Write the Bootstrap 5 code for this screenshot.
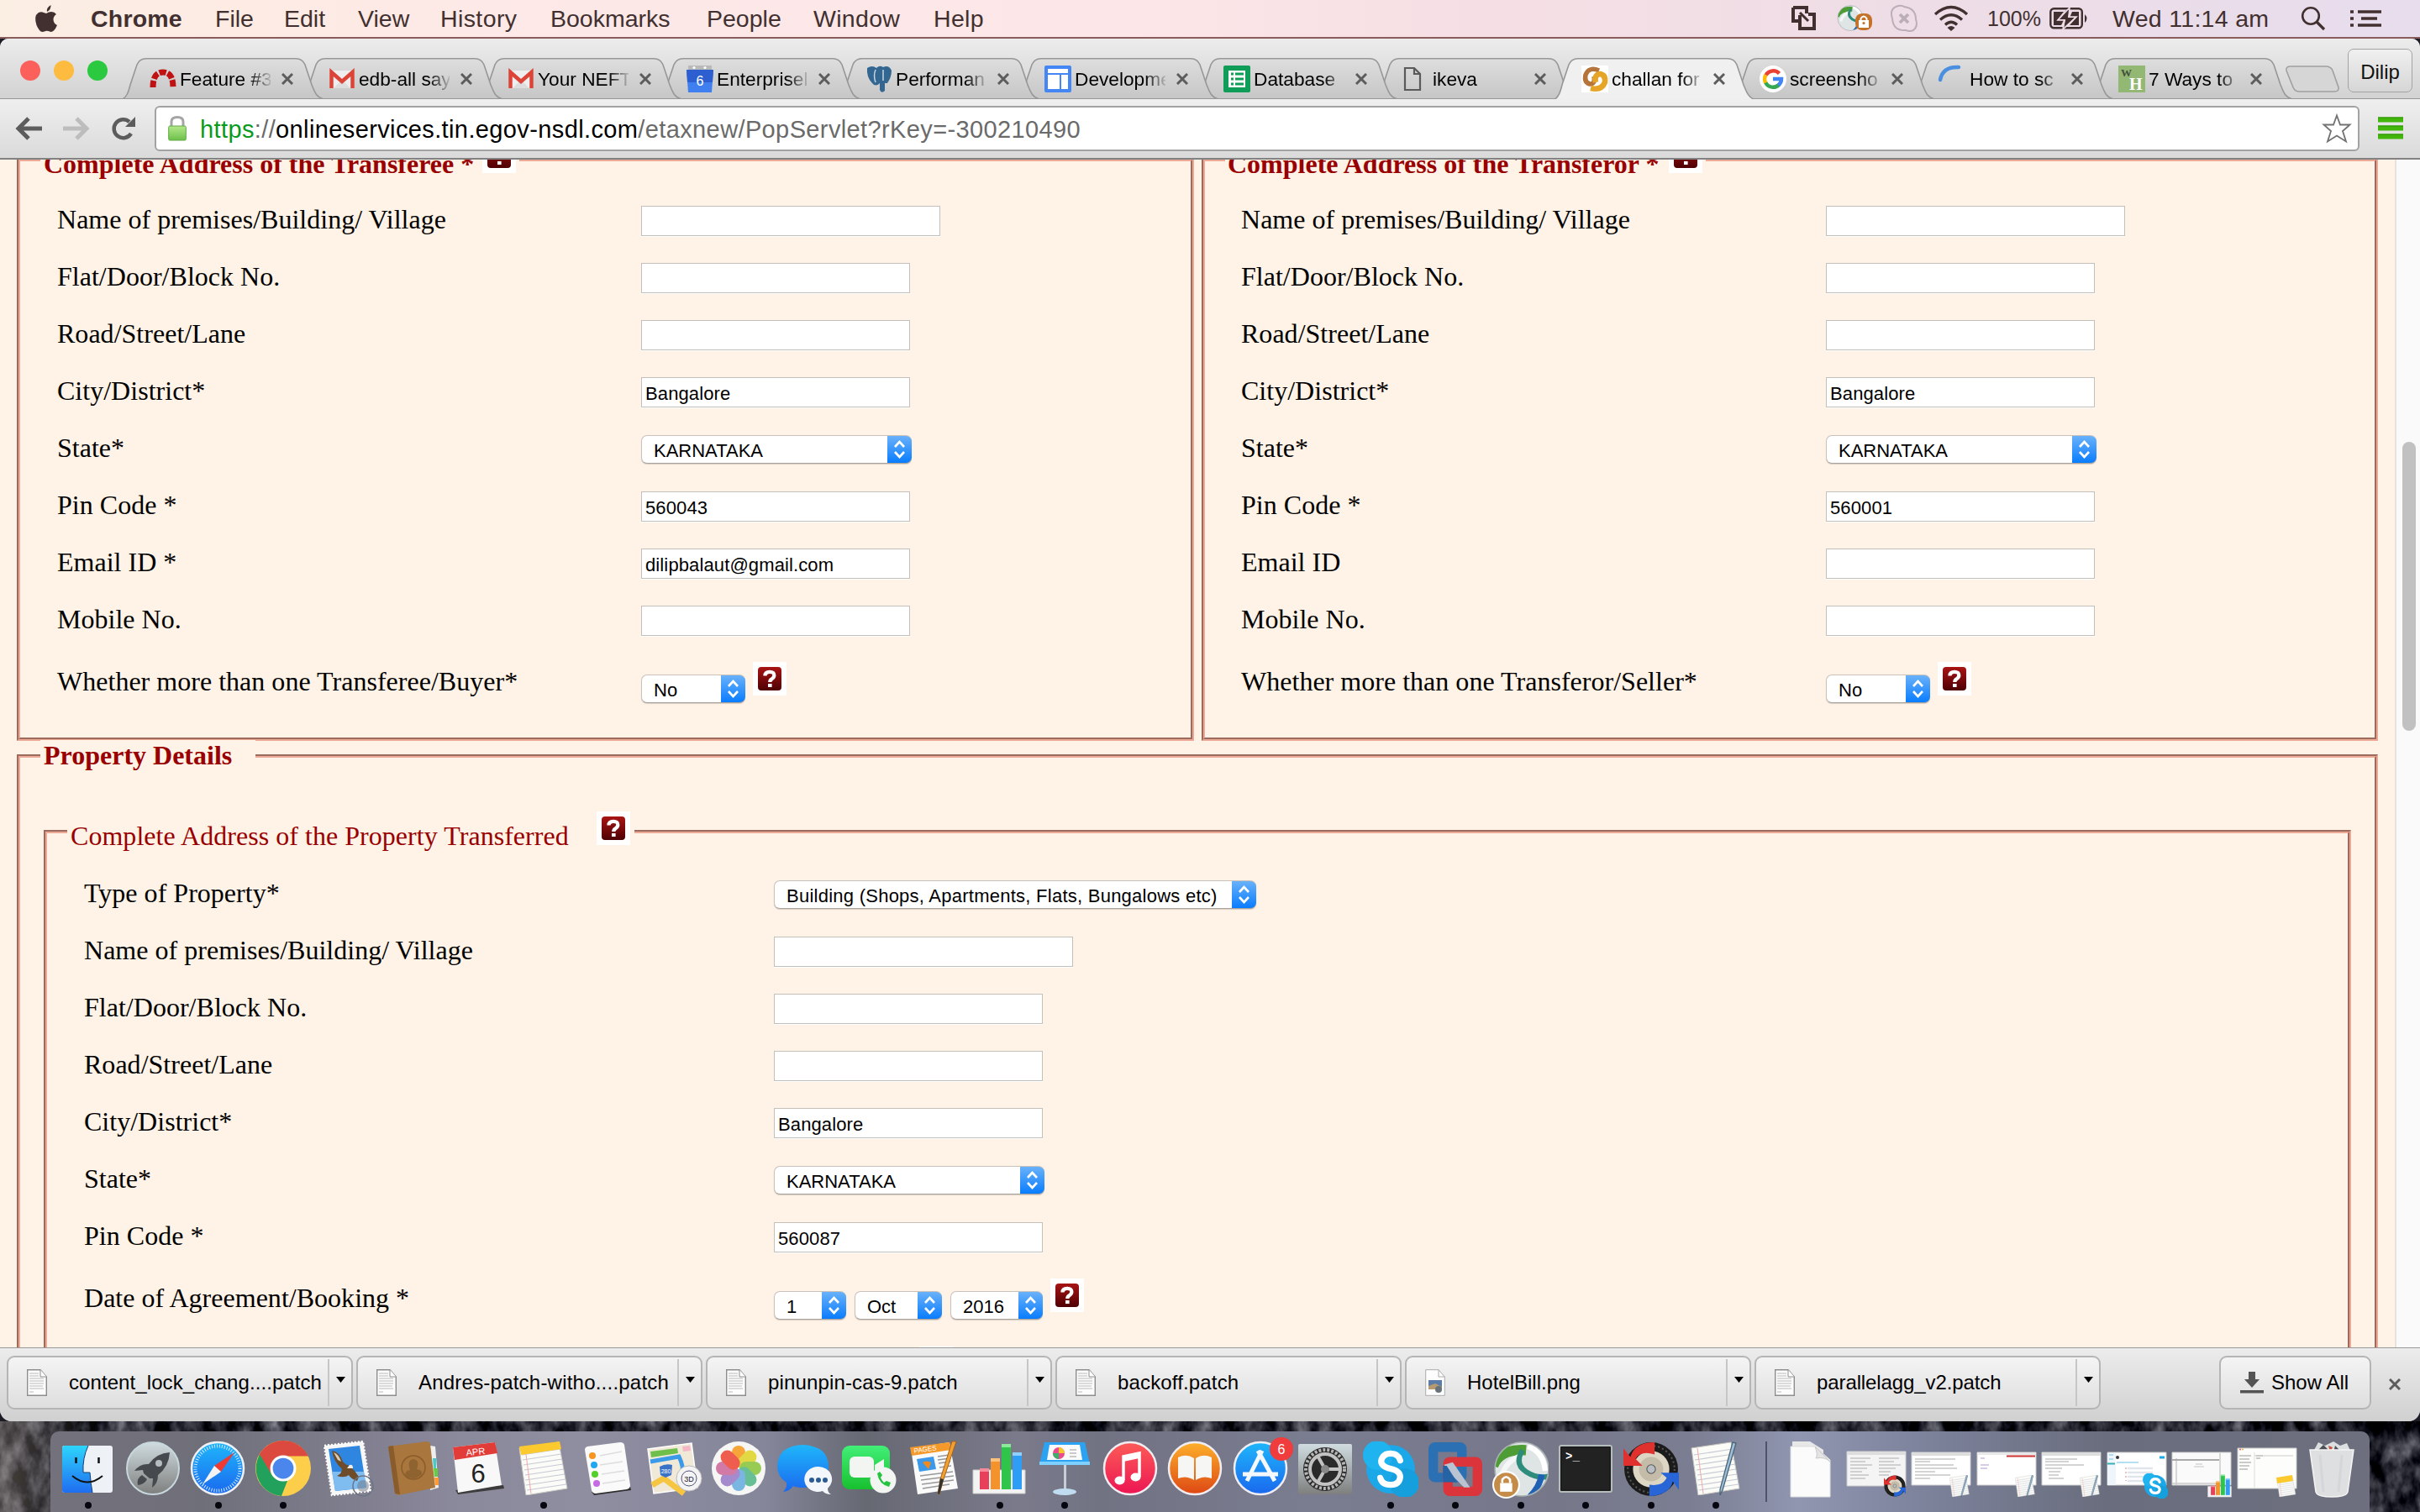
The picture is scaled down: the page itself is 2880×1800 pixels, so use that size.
<!DOCTYPE html>
<html lang="en">
<head>
<meta charset="utf-8">
<title>Challan form</title>
<link href="https://cdn.jsdelivr.net/npm/bootstrap@5.3.0/dist/css/bootstrap.min.css" rel="stylesheet">
<style>
html,body{width:2880px;height:1800px;overflow:hidden}
body{font-family:"Liberation Sans",Arial,sans-serif;color:#000;background:#1c1d24}
svg{display:block;overflow:visible;flex:none}
.menubar{height:46px;background:linear-gradient(90deg,#fbeee3 0,#fdebe4 300px,#fde8e8 700px,#fce6e7 1350px,#f5dfe4 1750px,#eedde6 2300px,#e7dded 2880px);border-bottom:2px solid #8a5c5c;color:#41302f;font-size:28.5px;line-height:46px;padding-left:42px;white-space:nowrap}
.menubar span{flex:none;margin-top:-1px}
.desk{height:1754px;background:#1c1d24}
.chromewin{height:1646px;background:#dcdcdc;border-radius:10px 10px 14px 14px;overflow:hidden;position:relative}
.tabstrip{height:72px;background:linear-gradient(#ececec,#d2d2d2);padding-top:23px;border-bottom:0;position:relative}
.tabstrip:after{content:"";position:absolute;left:0;right:0;bottom:0;height:1.5px;background:#989898;z-index:20}
.lights{width:145px;padding:3px 0 0 24px;gap:16px}
.lights i{width:24px;height:24px;border-radius:50%;display:block}
.ctab{width:240px;height:49px;margin-right:-27px;position:relative;flex:none}
.ctab>svg{position:absolute;left:0;top:0}
.ctab .inner{position:relative;height:49px;padding:0 0 0 33px}
.fav{width:32px;height:32px;flex:none}
.ttl{width:112px;font-size:22.7px;line-height:52px;padding-left:4px;white-space:nowrap;-webkit-mask-image:linear-gradient(90deg,#000 78%,transparent 103%);mask-image:linear-gradient(90deg,#000 78%,transparent 103%)}
.cls{margin-left:13px}
.ubtn{width:77px;height:52px;border:1.5px solid #a3a3a3;border-radius:7px;background:linear-gradient(#f0f0f0,#d6d6d6);font-size:24px;line-height:54px;text-align:center;margin-top:-11px;color:#111}
.toolbar{height:72px;background:linear-gradient(#efefef,#dadada);border-bottom:2px solid #828282;padding:8px 0 0 19px}
.omni{width:2624px;height:54px;border:2px solid #a2a2a2;border-radius:6px;background:#fff;margin-left:23px;padding:0 8px 0 14px}
.url{font-size:29px;color:#6a6a6a;letter-spacing:.38px;margin:3px 0 0 16px}
.pagev{height:1414px;background:#fff2e6;overflow:hidden;font-family:"Liberation Serif","Times New Roman",serif;font-size:32px}
.pagec{width:2850px;padding:0 20px;margin-top:-24px}
.gutter{width:30px;background:#fafafa;border-left:2px solid #e8e2dc;padding:336px 0 0 7px}
.gutter i{display:block;width:16px;height:344px;border-radius:8px;background:#c1c1c1}
.box{min-width:0;position:relative;border-style:solid;border-width:2px;border-color:#9c6b5d #eba996 #eba996 #9c6b5d}
.box:before{content:"";position:absolute;inset:0;border:2px solid;border-color:#eba996 #9c6b5d #9c6b5d #eba996;pointer-events:none}
.lgd{position:relative;background:#fff2e6;color:#990000;line-height:36px;display:flex;white-space:nowrap;padding:0 4px;width:max-content;margin:0}
.frow{height:68px;display:flex;align-items:center}
.frow label{line-height:36px;margin-top:-3px;flex:none;white-space:nowrap;letter-spacing:.02px}
.half label{width:695px}
.half.rt label{width:696px}
.full label{width:821px}
.frow.tall{align-items:flex-start;height:100px}
.frow.tall label{margin-top:21px}
.frow.tall .sel{margin-top:31px}
.frow.tall .helpq{margin-top:16px}
.inp{width:320px;height:36px;margin-top:1px;border:1.5px solid #c3bfbb;border-radius:0;background:#fff;padding:4px 0 0 4px;font:22px/30px "Liberation Sans",Arial,sans-serif;letter-spacing:.12px;color:#000;box-shadow:0 1px #fff}
.inp.wide{width:356px}
.sel{height:34px;margin-top:2px;border:1px solid #c9c1ba;border-bottom-color:#a8a19c;border-right:0;border-radius:7px;padding:2.5px 0 0 14px;font:22px/30px "Liberation Sans",Arial,sans-serif;color:#000;box-shadow:0 1px 1px #d8cec4;
background:url("data:image/svg+xml,%3Csvg xmlns='http://www.w3.org/2000/svg' viewBox='0 0 29 34'%3E%3Cdefs%3E%3ClinearGradient id='g' x2='0' y2='1'%3E%3Cstop stop-color='%236cb3fa'/%3E%3Cstop offset='1' stop-color='%23067bff'/%3E%3C/linearGradient%3E%3C/defs%3E%3Cpath fill='url(%23g)' d='M0 0h29v34H0z'/%3E%3Cpath d='M9 14l5.5-6 5.5 6M9 20l5.5 6 5.5-6' fill='none' stroke='white' stroke-width='2.6'/%3E%3C/svg%3E") right center/29px 34px no-repeat border-box #fff;white-space:nowrap;overflow:hidden}
.sel.long{letter-spacing:.25px}
.helpq{width:40px;height:40px;background:#fff;padding:6px;flex:none}
.shelf{height:88px;background:linear-gradient(#ececec,#d0d0d0);padding:9px 0 0 8px;border-top:1px solid #999}
.dl{width:412px;height:64px;border:2px solid #b5b5b5;border-radius:9px;background:linear-gradient(#f4f4f4,#dedede);margin-right:4px;font-size:24px;line-height:59px;padding-left:22px;white-space:nowrap;flex:none}
.dl .nm{flex:1;padding-left:26px}
.dl .ar{width:28px;height:56px;border-left:2px solid #c6c6c6;margin-top:2px;padding:21px 0 0 8px}
.showall{width:181px;height:64px;border:2px solid #b5b5b5;border-radius:9px;background:linear-gradient(#f4f4f4,#dedede);font-size:24px;padding-left:23px}
.dockwrap{height:108px;padding:12px 60px 0;position:relative;overflow:hidden}
.dockwrap>.wall{position:absolute;left:0;top:-14px}
.dock{width:2760px;height:96px;border-radius:10px 10px 0 0;background:linear-gradient(90deg,#73717b 0,#6f6f7a 180px,#8a889b 480px,#8f8da0 640px,#85869a 850px,#666872 970px,#7a7a8b 1150px,#717383 1250px,#7a7c90 1500px,#767789 1800px,#7b7e92 1950px,#9096b0 2080px,#7a8098 2250px,#696d7d 2450px,#6d6f7e 2760px);padding-left:5.5px;position:relative}
.app{width:77.52px;flex:none;padding-top:12px;position:relative}
.app>svg{margin:0 auto}
.app.on:after{content:"";position:absolute;left:35px;top:84px;width:8px;height:8px;border-radius:50%;background:#06060f}
.sep{width:35.5px;padding-left:20px}.sep:before{content:"";display:block;width:2px;height:72px;margin-top:12px;background:#50546a}
</style>
</head>
<body>
<svg width="0" height="0" class="position-absolute"><defs>
<linearGradient id="tg" x2="0" y2="1"><stop stop-color="#dedede"/><stop offset="1" stop-color="#c6c6c6"/></linearGradient>
<linearGradient id="rg" x2="0" y2="1"><stop stop-color="#a81414"/><stop offset="1" stop-color="#4e0004"/></linearGradient>
<linearGradient id="bl" x2="0" y2="1"><stop stop-color="#1fb6fb"/><stop offset="1" stop-color="#1a68ee"/></linearGradient>
<linearGradient id="fi" x2="0" y2="1"><stop stop-color="#2ed5fd"/><stop offset="1" stop-color="#1f6df0"/></linearGradient>
<linearGradient id="gr" x2="0" y2="1"><stop stop-color="#42ef77"/><stop offset="1" stop-color="#18c02f"/></linearGradient>
<linearGradient id="it" x2="0" y2="1"><stop stop-color="#fc5c57"/><stop offset="1" stop-color="#ec1553"/></linearGradient>
<linearGradient id="ib" x2="0" y2="1"><stop stop-color="#fdb02b"/><stop offset="1" stop-color="#dd4714"/></linearGradient>
<linearGradient id="sil" x2="0" y2="1"><stop stop-color="#d0dce0"/><stop offset="1" stop-color="#7e7f7e"/></linearGradient>
<symbol id="tab" viewBox="0 0 240 49"><path d="M0 49C6 47 8 40 10 32L18 8Q21 1 29 .8H207Q215 1 218 8L226 32C230 42 232 47 240 49Z" fill="url(#tg)" stroke="#979797" stroke-width="1.6"/></symbol>
<symbol id="tabA" viewBox="0 0 240 49"><path d="M0 50C6 47 8 40 10 32L18 8Q21 1 29 .8H207Q215 1 218 8L226 32C230 42 232 47 240 50Z" fill="#f0f0f0" stroke="#979797" stroke-width="1.6"/></symbol>
<symbol id="x" viewBox="0 0 14 14"><path d="M1 1l12 12M13 1L1 13" stroke="#5c5c5c" stroke-width="3" fill="none"/></symbol>
<symbol id="q" viewBox="0 0 28 28"><rect width="28" height="28" rx="4" fill="url(#rg)"/><path d="M8.500 10.500Q8.500 5.800 14 5.800T19.300 10Q19.300 12.500 16.500 14.300Q14.300 15.600 14.300 18" fill="none" stroke="#fff" stroke-width="4.300"/><rect x="12" y="20" width="4.600" height="4" fill="#fff"/></symbol>
<symbol id="gm" viewBox="0 0 32 32"><path d="M2 6h28v21H2z" fill="#eee"/><path d="M6 27L16 17 26 27z" fill="#ddd"/><path d="M3.500 27V8L16 19 28.500 8V27" fill="none" stroke="#dc4437" stroke-width="4.500"/></symbol>
<symbol id="file" viewBox="0 0 24 32"><path d="M.7 .7H16L23.300 9V31.300H.7Z" fill="#fcfcfc" stroke="#8d8d8d" stroke-width="1.400"/><path d="M16 .7V9H23.300" fill="#fff" stroke="#8d8d8d"/><path d="M3 5h11M3 8h11M3 11h17M3 14h17M3 17h17M3 20h16M3 23h17M3 27h5" stroke="#cfcfcf" stroke-width="1.500"/></symbol>
<symbol id="skype" viewBox="0 0 64 64"><circle cx="32" cy="32" r="28" fill="#1ba8e8"/><circle cx="17" cy="16" r="17" fill="#1fb3ef"/><circle cx="48" cy="48" r="17" fill="#169fdd"/><path d="M43 22Q41 14 32 14T21 22.500Q21 29 32 31.500T43 41Q42 50 32 50T20 42" fill="none" stroke="#fff" stroke-width="7" stroke-linecap="round"/></symbol>
<symbol id="note" viewBox="0 0 64 64"><path d="M3 8L50 1 60 56 11 64Z" fill="#fbfbf8" stroke="#c8c8c0"/><path d="M6 16L52 9M7 22L53 15M8 28L54 21M9 34L55 27M10 40L56 33M10 46L57 39M11 52L58 45M12 58L59 51" stroke="#c5cad3" stroke-width="1.200"/><path d="M10 8L17 62" stroke="#eaa" /></symbol>
<symbol id="textedit" viewBox="0 0 64 64"><use href="#note" width="64" height="64"/><path d="M56 2L40 58 37 64 37 57 52 1Z" fill="#9cc0da" stroke="#4e6476" stroke-width="1.300"/></symbol>
<symbol id="numbers" viewBox="0 0 64 64"><path d="M1 34H63V62H1Z" fill="#f3f3f3" stroke="#ccc"/><path d="M9 34h11v23H9z" fill="#e8405a"/><path d="M22 22h11v35H22z" fill="#f4932c"/><path d="M35 5h11v52H35z" fill="#2fc54a"/><path d="M48 15h11v42H48z" fill="#2e9df5"/><path d="M9 32h11v4H9z" fill="#f58a98"/><path d="M22 20h11v4H22z" fill="#fcc27c"/><path d="M35 3h11v4H35z" fill="#8be89a"/><path d="M48 13h11v4H48z" fill="#90d0ff"/></symbol>
<symbol id="sync" viewBox="0 0 64 64"><circle cx="32" cy="32" r="31" fill="#1b1b1b"/><circle cx="32" cy="32" r="27" fill="none" stroke="#555" stroke-width="2" stroke-dasharray="2 3"/><circle cx="32" cy="32" r="21" fill="#ddd6c4"/><circle cx="32" cy="32" r="14" fill="#c4bca8"/><path d="M36 1Q13 1 8 18L0 8V28H22L14 20Q20 10 36 15Z" fill="#e0312e"/><path d="M30 63Q53 62 57 46L64 56V36H43L50 42Q46 52 30 50Z" fill="#2866d8"/><circle cx="32" cy="32" r="5" fill="#b8bec4" stroke="#555"/></symbol>
<symbol id="globe" viewBox="0 0 64 64"><clipPath id="gc"><circle cx="33" cy="32" r="31"/></clipPath><g clip-path="url(#gc)"><rect width="64" height="64" fill="#dfe5e5"/><path d="M0 28Q8 8 38 10" stroke="#4d9c35" stroke-width="12" fill="none"/><path d="M10 40Q14 22 34 16" stroke="#f4f7f6" stroke-width="6" fill="none"/><path d="M34 10Q24 26 38 35T66 40" stroke="#2d8c7c" stroke-width="6" fill="none"/><path d="M56 38Q54 52 42 64" stroke="#1f62b4" stroke-width="7" fill="none"/><path d="M40 6Q58 12 60 34" stroke="#fff" stroke-width="6" fill="none"/></g><circle cx="33" cy="32" r="31" fill="none" stroke="#a9b2b2" stroke-width="1.500"/></symbol>
<symbol id="vm" viewBox="0 0 64 64"><rect x="6.500" y="6.500" width="33" height="35" rx="2" fill="none" stroke="#2c70b4" stroke-width="11"/><rect x="23.500" y="23.500" width="34" height="34" rx="2" fill="none" stroke="#dc343b" stroke-width="11"/><path d="M18 29H29V42H18Z" fill="#2563a4"/><path d="M19 27L29 24L49 53H42L29 40Z" fill="#b9c3d2"/><path d="M18 28H22L34 47H18Z" fill="#2563a4"/></symbol>
<linearGradient id="lockg" x2="0" y2="1"><stop stop-color="#b5e88a"/><stop offset="1" stop-color="#6cc04a"/></linearGradient>
</defs></svg>

<header class="menubar d-flex align-items-center position-relative">
 <svg width="26" height="32" viewBox="0 0 26 32" style="width:26px"><path d="M18.500 0Q19 5 14 8Q13 3 18.500 0ZM13 10Q16 8 19 8Q23 8.200 25 11Q21.500 13.500 21.500 17Q21.500 22 26 24Q22.500 32 18.500 32Q15 30.500 13 30.700Q9.500 32 8 32Q4.500 31 1.500 24Q-2 13 3.500 9.300Q7 7.200 10 9Z" fill="#41302f"/></svg>
 <span class="fw-bold" style="margin-left:40px;width:148px;letter-spacing:.2px">Chrome</span><span style="width:82px">File</span><span style="width:88px">Edit</span><span style="width:98px">View</span><span style="width:131px;letter-spacing:.4px">History</span><span style="width:186px">Bookmarks</span><span style="width:127px">People</span><span style="width:143px;letter-spacing:.3px">Window</span><span style="letter-spacing:.3px">Help</span>
 <div class="d-flex align-items-center ms-auto" style="padding-right:46px">
  <svg width="30" height="30" viewBox="0 0 30 30"><path d="M2 2H18V9M2 2V18H9M10 11V27H27V10H20" fill="none" stroke="#41302f" stroke-width="4"/><path d="M10 8L20 18" stroke="#41302f" stroke-width="3"/></svg>
  <svg width="43" height="32" viewBox="0 0 43 32" style="margin-left:24px"><use href="#globe" width="31" height="31"/><rect x="22" y="10" width="20" height="20" rx="8" fill="#c4722a"/><rect x="26" y="18" width="12" height="9" fill="#fff"/><path d="M28.500 19V16Q32 11 35.500 16V19" fill="none" stroke="#fff" stroke-width="2"/><circle cx="32" cy="21.500" r="1.600" fill="#c4722a"/></svg>
  <svg width="32" height="32" viewBox="0 0 32 32" style="margin-left:21px"><path d="M9 1Q14 0 16 2Q30 4 30 17Q33 25 27 30Q23 32 18 30Q3 31 2 16Q-2 4 9 1Z" fill="none" stroke="#bcaeb6" stroke-width="2"/><path d="M11 11L21 21M21 11L11 21" stroke="#bcaeb6" stroke-width="3.800"/></svg>
  <svg width="42" height="30" viewBox="0 0 42 30" style="margin-left:19px"><path d="M2 10Q21-7 40 10M8 16.500Q21 5 34 16.500M14 22.500Q21 16 28 22.500" fill="none" stroke="#41302f" stroke-width="3.300"/><path d="M16.500 26Q21 22 25.500 26L21 30Z" fill="#41302f"/></svg>
  <span style="margin-left:22px;width:74px;font-size:25px">100%</span>
  <svg width="46" height="26" viewBox="0 0 46 26"><rect x="1.300" y="1.300" width="37.500" height="23" rx="4" fill="none" stroke="#41302f" stroke-width="2.400"/><path d="M5 5H17L9 15H17L14 21H5ZM35 5H27L24.500 11H33L24 21H35Z" fill="#41302f"/><path d="M20 3L11 14H19L17 24L30 12H22L24 3Z" fill="#41302f"/><path d="M24 0L10 15H18L16 26L32 11H23Z" fill="none" stroke="#eedde6" stroke-width="1.600"/><path d="M42 8Q47 13 42 18Z" fill="#41302f"/></svg>
  <span style="margin-left:29px;width:224px;font-size:28.500px;letter-spacing:.3px">Wed 11:14 am</span>
  <svg width="30" height="28" viewBox="0 0 30 28"><circle cx="12" cy="11" r="9.800" fill="none" stroke="#41302f" stroke-width="2.600"/><path d="M19 18L28 27" stroke="#41302f" stroke-width="3.200"/></svg>
  <svg width="37" height="20" viewBox="0 0 37 20" style="margin-left:29px"><path d="M0 2H4M9 2H37M0 10H4M13 10H32M0 18H4M9 18H37" stroke="#41302f" stroke-width="3.600"/></svg>
 </div>
</header>

<div class="desk">
<main class="chromewin">
 <div class="tabstrip d-flex">
  <div class="lights d-flex"><i style="background:#fc605b"></i><i style="background:#fdbc40"></i><i style="background:#2ac940"></i></div>
  <div class="ctab" style="z-index:12"><svg width="240" height="49"><use href="#tab"/></svg><div class="inner d-flex align-items-center"><svg class="fav" viewBox="0 0 32 32"><path d="M4 26Q4 8 16 8T28 26" fill="none" stroke="#c01212" stroke-width="7" stroke-dasharray="8 2"/></svg><div class="ttl">Feature #3</div><svg class="cls" width="14" height="14"><use href="#x"/></svg></div></div>
  <div class="ctab" style="z-index:11"><svg width="240" height="49"><use href="#tab"/></svg><div class="inner d-flex align-items-center"><svg class="fav"><use href="#gm"/></svg><div class="ttl">edb-all say</div><svg class="cls" width="14" height="14"><use href="#x"/></svg></div></div>
  <div class="ctab" style="z-index:10"><svg width="240" height="49"><use href="#tab"/></svg><div class="inner d-flex align-items-center"><svg class="fav"><use href="#gm"/></svg><div class="ttl">Your NEFT</div><svg class="cls" width="14" height="14"><use href="#x"/></svg></div></div>
  <div class="ctab" style="z-index:9"><svg width="240" height="49"><use href="#tab"/></svg><div class="inner d-flex align-items-center"><svg class="fav" viewBox="0 0 32 32"><path d="M2 0h28v6H2z" fill="#b9b9b9"/><circle cx="9" cy="2.500" r="1.600" fill="#fff"/><circle cx="22" cy="2.500" r="1.600" fill="#fff"/><path d="M0 5h32L30 32H2Z" fill="#3f7ff0"/><path d="M0 5h32L31 20H1Z" fill="#2d5fd0"/><text x="16" y="24" font-size="16" text-anchor="middle" fill="#fff">6</text></svg><div class="ttl">Enterprisel</div><svg class="cls" width="14" height="14"><use href="#x"/></svg></div></div>
  <div class="ctab" style="z-index:8"><svg width="240" height="49"><use href="#tab"/></svg><div class="inner d-flex align-items-center"><svg class="fav" viewBox="0 0 32 32"><path d="M2 3Q8-1 13 3Q17-1 21 2Q28-1 31 6Q31 14 26 21H23V30Q19 34 17 29V21Q12 26 8 21Q1 14 2 3Z" fill="#336791"/><path d="M12 5Q9 12 12 20M21 5V18" stroke="#c6d5e2" stroke-width="1.500" fill="none"/></svg><div class="ttl">Performan</div><svg class="cls" width="14" height="14"><use href="#x"/></svg></div></div>
  <div class="ctab" style="z-index:7"><svg width="240" height="49"><use href="#tab"/></svg><div class="inner d-flex align-items-center"><svg class="fav" viewBox="0 0 32 32"><rect width="32" height="32" rx="2" fill="#4486f4"/><path d="M4 4h24v5H4zM4 11h14v17H4zM20 11h8v17h-8z" fill="#fff"/></svg><div class="ttl">Developme</div><svg class="cls" width="14" height="14"><use href="#x"/></svg></div></div>
  <div class="ctab" style="z-index:6"><svg width="240" height="49"><use href="#tab"/></svg><div class="inner d-flex align-items-center"><svg class="fav" viewBox="0 0 32 32"><rect width="32" height="32" rx="2" fill="#109d58"/><path d="M6 6h20v20H6z" fill="#fff"/><path d="M9 8.500h3v3H9zM14 8.500h10v3H14zM9 14.500h3v3H9zM14 14.500h10v3H14zM9 20.500h3v3H9zM14 20.500h10v3H14z" fill="#109d58"/></svg><div class="ttl">Database</div><svg class="cls" width="14" height="14"><use href="#x"/></svg></div></div>
  <div class="ctab" style="z-index:5"><svg width="240" height="49"><use href="#tab"/></svg><div class="inner d-flex align-items-center"><svg class="fav" viewBox="0 0 32 32"><path d="M3 3H14L21 10V29H3ZM14 3V10H21" fill="none" stroke="#5a5a5a" stroke-width="2.200"/></svg><div class="ttl">ikeva</div><svg class="cls" width="14" height="14"><use href="#x"/></svg></div></div>
  <div class="ctab" style="z-index:30"><svg width="240" height="49"><use href="#tabA"/></svg><div class="inner d-flex align-items-center"><svg class="fav" viewBox="0 0 32 32"><path d="M0 0h32v32H0z" fill="#fff"/><path d="M21 6Q9 1 5 11Q3 20 10 22Q17 22 15 13" fill="none" stroke="#b5753a" stroke-width="5.500"/><path d="M11 27Q24 30 28 20Q29 11 22 10Q15 11 17 20" fill="none" stroke="#e7a528" stroke-width="6.500"/></svg><div class="ttl">challan for</div><svg class="cls" width="14" height="14"><use href="#x"/></svg></div></div>
  <div class="ctab" style="z-index:4"><svg width="240" height="49"><use href="#tab"/></svg><div class="inner d-flex align-items-center"><svg class="fav" viewBox="0 0 32 32" style="margin-left:-1px"><circle cx="16" cy="16" r="16" fill="#fff"/><path d="M23.500 9.500A10 10 0 0 0 7.500 11.500" fill="none" stroke="#ea4335" stroke-width="4.500"/><path d="M7.500 11A10 10 0 0 0 7.500 21" fill="none" stroke="#fbbc05" stroke-width="4.500"/><path d="M7.300 20.500A10 10 0 0 0 23 23" fill="none" stroke="#34a853" stroke-width="4.500"/><path d="M22.500 23.500A10 10 0 0 0 26 16H16" fill="none" stroke="#4285f4" stroke-width="4.500"/></svg><div class="ttl">screensho</div><svg class="cls" width="14" height="14"><use href="#x"/></svg></div></div>
  <div class="ctab" style="z-index:3"><svg width="240" height="49"><use href="#tab"/></svg><div class="inner d-flex align-items-center"><svg class="fav" viewBox="0 0 32 32"><path d="M23 2Q4 1 1 17" fill="none" stroke="#4a8fe0" stroke-width="4.500" stroke-linecap="round"/></svg><div class="ttl">How to sc</div><svg class="cls" width="14" height="14"><use href="#x"/></svg></div></div>
  <div class="ctab" style="z-index:2"><svg width="240" height="49"><use href="#tab"/></svg><div class="inner d-flex align-items-center"><svg class="fav" viewBox="0 0 32 32"><path d="M0 0h32v32H0z" fill="#93b874"/><text x="3" y="13" font-family="Liberation Serif" font-weight="bold" font-size="13" fill="#444f3c">W</text><text x="13" y="29" font-family="Liberation Serif" font-weight="bold" font-size="20" fill="#fff">H</text></svg><div class="ttl">7 Ways to</div><svg class="cls" width="14" height="14"><use href="#x"/></svg></div></div>
  <svg width="64" height="32" viewBox="0 0 64 32" style="margin:9px 10px 0 19px"><path d="M6 1H48Q54 1 56 6L63 26Q64 31 58 31H17Q11 31 9 26L1 6Q0 1 6 1Z" fill="#d6d6d6" stroke="#a0a0a0" stroke-width="1.600"/></svg>
  <div class="ubtn">Dilip</div>
 </div>
 <div class="toolbar d-flex">
  <svg width="31" height="28" viewBox="0 0 31 28" style="margin-top:13px"><path d="M31 14H5M15 2L3 14L15 26" fill="none" stroke="#5c5c5c" stroke-width="5"/></svg>
  <svg width="31" height="28" viewBox="0 0 31 28" style="margin:13px 0 0 25px"><path d="M0 14H26M16 2L28 14L16 26" fill="none" stroke="#bdbdbd" stroke-width="5"/></svg>
  <svg width="27" height="28" viewBox="0 0 27 28" style="margin:13px 0 0 28px"><path d="M22 20A11 11 0 1 1 20 6" fill="none" stroke="#5c5c5c" stroke-width="4.500"/><path d="M27 0V12H15Z" fill="#5c5c5c"/></svg>
  <div class="omni d-flex align-items-center"><svg width="22" height="30" viewBox="0 0 22 30"><path d="M4 13V7Q4 1.500 11 1.500T18 7V13" fill="none" stroke="#a5a5a5" stroke-width="3"/><rect x=".7" y="12" width="20.600" height="17" rx="1.500" fill="url(#lockg)" stroke="#62a845"/></svg><span class="url"><span style="color:#0a9a1c">https</span>://<span class="text-black">onlineservices.tin.egov-nsdl.com</span>/etaxnew/PopServlet?rKey=-300210490</span><svg class="ms-auto" width="34" height="34" viewBox="0 0 34 34"><path d="M17 1.500L21 12.500H32.500L24 20L28 32.500L17 25.500L6 32.500L10 20L1.500 12.500H13Z" fill="#fff" stroke="#727272" stroke-width="1.800"/></svg></div>
  <svg width="30" height="28" viewBox="0 0 30 28" style="margin:13px 0 0 22px"><path d="M0 3.500H30M0 13.500H30M0 23.500H30" stroke="#43b60c" stroke-width="6"/><path d="M0 1H30M0 11H30M0 21H30" stroke="#2b9100" stroke-width="1"/></svg>
 </div>

 <div class="pagev d-flex">
 <div class="pagec">
  <div class="d-flex" style="padding-top:22px;gap:9px">
   <section class="box half" style="width:1401px;height:694px;padding:0 0 0 26px">
    <div class="lgd fw-bold" style="margin-top:-24px;height:42px;padding-top:2px"><span style="width:522px;padding-top:9px">Complete Address of the Transferee *</span><span class="helpq" style="margin-top:-2px"><svg width="28" height="28"><use href="#q"/></svg></span></div>
    <div style="padding:20px 0 0 20px">
     <div class="frow"><label>Name of premises/Building/ Village</label><input class="inp wide"></div>
     <div class="frow"><label>Flat/Door/Block No.</label><input class="inp"></div>
     <div class="frow"><label>Road/Street/Lane</label><input class="inp"></div>
     <div class="frow"><label>City/District*</label><input class="inp" value="Bangalore"></div>
     <div class="frow"><label>State*</label><div class="sel" style="width:322px">KARNATAKA</div></div>
     <div class="frow"><label>Pin Code *</label><input class="inp" value="560043"></div>
     <div class="frow"><label>Email ID *</label><input class="inp" value="dilipbalaut@gmail.com"></div>
     <div class="frow"><label>Mobile No.</label><input class="inp"></div>
     <div class="frow tall"><label>Whether more than one Transferee/Buyer*</label><div class="sel" style="width:124px">No</div><span class="helpq" style="margin-left:9px"><svg width="28" height="28"><use href="#q"/></svg></span></div>
    </div>
   </section>
   <section class="box half rt" style="width:1400px;height:694px;padding:0 0 0 26px">
    <div class="lgd fw-bold" style="margin-top:-24px;height:42px;padding:2px 4px 0 3px"><span style="width:525px;padding-top:9px">Complete Address of the Transferor *</span><span class="helpq" style="margin-top:-2px"><svg width="28" height="28"><use href="#q"/></svg></span></div>
    <div style="padding:20px 0 0 19px">
     <div class="frow"><label>Name of premises/Building/ Village</label><input class="inp wide"></div>
     <div class="frow"><label>Flat/Door/Block No.</label><input class="inp"></div>
     <div class="frow"><label>Road/Street/Lane</label><input class="inp"></div>
     <div class="frow"><label>City/District*</label><input class="inp" value="Bangalore"></div>
     <div class="frow"><label>State*</label><div class="sel" style="width:322px">KARNATAKA</div></div>
     <div class="frow"><label>Pin Code *</label><input class="inp" value="560001"></div>
     <div class="frow"><label>Email ID</label><input class="inp"></div>
     <div class="frow"><label>Mobile No.</label><input class="inp"></div>
     <div class="frow tall"><label>Whether more than one Transferor/Seller*</label><div class="sel" style="width:124px">No</div><span class="helpq" style="margin-left:9px"><svg width="28" height="28"><use href="#q"/></svg></span></div>
    </div>
   </section>
  </div>
  <section class="box" style="margin-top:16px;height:900px;padding:0 30px 0 30px">
   <div class="lgd fw-bold" style="margin:-19px 0 0 -4px;width:256px">Property Details</div>
   <section class="box full" style="margin-top:71px;height:800px;padding-left:26px">
    <div class="lgd" style="height:40px;margin-top:-24px;width:675px"><span style="width:626px;padding-top:11px;letter-spacing:.04px">Complete Address of the Property Transferred</span><span class="helpq"><svg width="28" height="28"><use href="#q"/></svg></span></div>
    <div style="padding:24px 0 0 20px">
     <div class="frow"><label>Type of Property*</label><div class="sel long" style="width:574px">Building (Shops, Apartments, Flats, Bungalows etc)</div></div>
     <div class="frow"><label>Name of premises/Building/ Village</label><input class="inp wide"></div>
     <div class="frow"><label>Flat/Door/Block No.</label><input class="inp"></div>
     <div class="frow"><label>Road/Street/Lane</label><input class="inp"></div>
     <div class="frow"><label>City/District*</label><input class="inp" value="Bangalore"></div>
     <div class="frow"><label>State*</label><div class="sel" style="width:322px">KARNATAKA</div></div>
     <div class="frow"><label>Pin Code *</label><input class="inp" value="560087"></div>
     <div class="frow tall" style="height:97px"><label>Date of Agreement/Booking *</label><div class="sel" style="width:86px">1</div><div class="sel" style="width:104px;margin-left:10px">Oct</div><div class="sel" style="width:110px;margin-left:10px">2016</div><span class="helpq" style="margin-left:9px"><svg width="28" height="28"><use href="#q"/></svg></span></div>
     <div style="padding-left:994px"><span class="helpq d-block"></span></div>
    </div>
   </section>
  </section>
 </div>
 <div class="gutter"><i></i></div>
 </div>

 <div class="shelf d-flex">
  <div class="dl d-flex"><svg width="24" height="32" style="margin-top:14px"><use href="#file"/></svg><span class="nm" style="letter-spacing:.08px">content_lock_chang....patch</span><span class="ar"><svg width="11" height="8"><path d="M0 0h11L5.500 7z"/></svg></span></div>
  <div class="dl d-flex"><svg width="24" height="32" style="margin-top:14px"><use href="#file"/></svg><span class="nm" style="letter-spacing:.22px">Andres-patch-witho....patch</span><span class="ar"><svg width="11" height="8"><path d="M0 0h11L5.500 7z"/></svg></span></div>
  <div class="dl d-flex"><svg width="24" height="32" style="margin-top:14px"><use href="#file"/></svg><span class="nm" style="letter-spacing:.15px">pinunpin-cas-9.patch</span><span class="ar"><svg width="11" height="8"><path d="M0 0h11L5.500 7z"/></svg></span></div>
  <div class="dl d-flex"><svg width="24" height="32" style="margin-top:14px"><use href="#file"/></svg><span class="nm" style="letter-spacing:.15px">backoff.patch</span><span class="ar"><svg width="11" height="8"><path d="M0 0h11L5.500 7z"/></svg></span></div>
  <div class="dl d-flex"><svg width="24" height="32" viewBox="0 0 24 32" style="margin-top:14px"><path d="M.7 .7H16L23.300 9V31.300H.7Z" fill="#fdfdfd" stroke="#aaa"/><path d="M16 .7V9H23.300" fill="none" stroke="#aaa"/><path d="M4 13h16v11H4z" fill="#5a7ca8"/><path d="M4 20l8-3 8 4v3H4z" fill="#b89a70"/><circle cx="16" cy="24" r="4" fill="#68727a"/></svg><span class="nm">HotelBill.png</span><span class="ar"><svg width="11" height="8"><path d="M0 0h11L5.500 7z"/></svg></span></div>
  <div class="dl d-flex"><svg width="24" height="32" style="margin-top:14px"><use href="#file"/></svg><span class="nm" style="letter-spacing:-.1px">parallelagg_v2.patch</span><span class="ar"><svg width="11" height="8"><path d="M0 0h11L5.500 7z"/></svg></span></div>
  <div class="showall d-flex align-items-center ms-auto"><svg width="28" height="26" viewBox="0 0 28 26"><path d="M10 0h8v9h5L14 19 5 9h5zM0 22h28v3.500H0z" fill="#545454"/></svg><span style="margin-left:9px">Show All</span></div>
  <svg width="14" height="14" style="margin:27px 23px 0 21px"><use href="#x"/></svg>
 </div>
</main>

<div class="dockwrap">
 <svg class="wall" width="2880" height="122"><defs><filter id="rock" x="0" y="0" width="100%" height="100%" color-interpolation-filters="sRGB"><feTurbulence type="fractalNoise" baseFrequency=".05 .03" numOctaves="4" seed="7"/><feColorMatrix values=".9 0 0 0 -.32  .9 0 0 0 -.315  .92 0 0 0 -.29  0 0 0 0 1"/></filter><linearGradient id="lf"><stop stop-color="#b5a89c" stop-opacity=".4"/><stop offset="1" stop-color="#b5a89c" stop-opacity="0"/></linearGradient></defs><rect width="2880" height="122" filter="url(#rock)"/><rect width="120" height="122" fill="url(#lf)"/></svg>
 <div class="dock d-flex">
  <div class="app on"><svg width="64" height="64" viewBox="0 0 64 64"><rect x="2" y="5" width="60" height="56" rx="3" fill="#eef2f6"/><path d="M5 5H33Q26 20 27 37H35Q36 50 38 61H5Q2 61 2 58V8Q2 5 5 5Z" fill="url(#fi)"/><path d="M33 5Q26 20 27 37H35Q36 50 38 61" fill="none" stroke="#15406e" stroke-width="1"/><path d="M18.500 19V26M45.500 19V26" stroke="#111" stroke-width="2.500"/><path d="M14 41Q32 56 50 41" fill="none" stroke="#111" stroke-width="2"/></svg></div>
  <div class="app"><svg width="64" height="64" viewBox="0 0 64 64"><circle cx="32" cy="32" r="31" fill="url(#sil)" stroke="#c8d8de" stroke-width="2"/><path d="M52 13Q36 14 27 27Q17 26 10 35L20 34 21 38 28 44 32 44 31 55Q38 50 38 40Q51 30 52 13Z" fill="#464a4e"/><circle cx="39" cy="26" r="4" fill="#b5bdc0"/><path d="M19 40Q12 44 14 52Q22 51 25 45Z" fill="#464a4e"/></svg></div>
  <div class="app on"><svg width="64" height="64" viewBox="0 0 64 64"><circle cx="32" cy="32" r="31" fill="url(#bl)" stroke="#eef2f6" stroke-width="2.500"/><circle cx="32" cy="32" r="26.500" fill="none" stroke="#cfeaff" stroke-width="4" stroke-dasharray="1 2"/><path d="M52 13L36 36 28 29Z" fill="#ee3a32"/><path d="M14 51L28 29 36 36Z" fill="#f3f3f3"/></svg></div>
  <div class="app on"><svg width="66" height="66" viewBox="0 0 64 64" style="margin-top:-1px"><circle cx="32" cy="32" r="32" fill="#fdce4a"/><path d="M4 17A32 32 0 0 1 61 18H32L18 38Z" fill="#dc4a3f"/><path d="M5 16L18 38Q24 48 37 46L30 64A32 32 0 0 1 5 16Z" fill="#22a15d"/><circle cx="32" cy="32" r="15" fill="#fff"/><circle cx="32" cy="32" r="12" fill="#4a86ec"/></svg></div>
  <div class="app"><svg width="64" height="64" viewBox="0 0 64 64"><path d="M4 5L50 0 59 59 13 64Z" fill="#f6f6f6" stroke="#fff" stroke-width="2.500" stroke-dasharray="2 2"/><path d="M9 9L46 5 54 55 17 59Z" fill="#2e86e0"/><path d="M13 36L51 36 54 55 17 59Z" fill="#7fbcf0"/><path d="M13 11Q22 12 26 24Q29 28 34 29Q40 34 45 42L43 47Q36 45 33 40Q28 44 19 41Q25 38 25 33Q15 24 13 11Z" fill="#6e4c2a"/><path d="M15 13Q21 15 24 24L20 22Z" fill="#d8cdb8"/><path d="M34 28Q38 27 38 32L31 32Z" fill="#f3efe6"/><circle cx="50" cy="53" r="12" fill="none" stroke="#6d7584" stroke-width="1.500"/><circle cx="50" cy="53" r="7" fill="#6d7584" opacity=".5"/></svg></div>
  <div class="app"><svg width="64" height="64" viewBox="0 0 64 64"><path d="M52 5L58 6 62 55 52 58Z" fill="#eee"/><path d="M55 20h4v12h-3z" fill="#4cc"/><path d="M56 32h5v10h-4z" fill="#6c4"/><path d="M57 43h5v9h-4z" fill="#f93"/><path d="M2 6L48 0Q51 0 52 3L58 55 14 64 10 62Z" fill="#a9763d"/><path d="M2 6L8 5 16 63 10 62Z" fill="#8a5c2b"/><circle cx="32" cy="31" r="14" fill="none" stroke="#8a5c2b" stroke-width="1.500"/><path d="M22 41Q22 34 28 34 24 22 32 21 40 22 36 33 43 34 42 39 33 48 22 41Z" fill="#8f6330"/></svg></div>
  <div class="app"><svg width="64" height="64" viewBox="0 0 64 64"><path d="M5 58L62 52 63 56 8 63Z" fill="#3c3c3c"/><path d="M2 7L52 1 60 52 8 61Z" fill="#f8f8f8"/><path d="M2 7L52 1 55 14 4 22Z" fill="#e23c39"/><text x="29" y="16" font-size="11" text-anchor="middle" fill="#fff" transform="rotate(-6 29 13)">APR</text><text x="32" y="49" font-size="31" text-anchor="middle" fill="#222">6</text></svg></div>
  <div class="app on"><svg width="64" height="64" viewBox="0 0 64 64"><use href="#note" width="64" height="64"/><path d="M3 6L51 0 53 9 5 16Z" fill="#fcc92f"/></svg></div>
  <div class="app"><svg width="64" height="64" viewBox="0 0 64 64"><path d="M12 60L58 54 59 58 15 64Z" fill="#2c2c2c"/><path d="M7 6L46 1Q50 1 51 4L58 52Q58 56 54 57L17 62Q13 62 12 58L4 10Q4 7 7 6Z" fill="#fafafa"/><circle cx="13" cy="17" r="4" fill="#f7931e"/><circle cx="15" cy="28" r="4" fill="#1ea7f2"/><circle cx="16" cy="39" r="4" fill="#54cf2c"/><circle cx="18" cy="50" r="4" fill="#c56be4"/><path d="M22 17L48 12M22 28L49 24M24 39L51 35M25 50L52 46" stroke="#ddd" stroke-width="1.500"/></svg></div>
  <div class="app"><svg width="64" height="64" viewBox="0 0 64 64"><path d="M1 9L53 2 60 55 8 62Z" fill="#f0e9d8" stroke="#fff" stroke-width="1.500"/><path d="M4 12L36 8 37 14 5 19Z" fill="#6ebf4c"/><path d="M42 6L51 5 52 11 43 12Z" fill="#f5b6c6"/><path d="M4 24L38 18Q44 30 42 40" fill="none" stroke="#3c9be8" stroke-width="5"/><path d="M6 52L20 44 44 62" fill="none" stroke="#f6c643" stroke-width="7"/><path d="M15 30Q22 26 30 28L29 40 22 43 16 40Z" fill="#3a72c8"/><text x="22.500" y="38" font-size="7" fill="#fff" text-anchor="middle">280</text><circle cx="50" cy="44" r="15" fill="#f4f4f4" stroke="#bbb"/><circle cx="50" cy="44" r="9" fill="none" stroke="#557"/><text x="50" y="48" font-size="9" text-anchor="middle" fill="#223">3D</text></svg></div>
  <div class="app"><svg width="64" height="64" viewBox="-32 -32 64 64"><circle r="32" fill="#f6f6f4"/><g opacity=".88"><rect x="-8" y="-27" width="16" height="26" rx="8" fill="#f79a20"/><rect x="-8" y="-27" width="16" height="26" rx="8" fill="#dfd52c" transform="rotate(45)"/><rect x="-8" y="-27" width="16" height="26" rx="8" fill="#8cc63e" transform="rotate(90)"/><rect x="-8" y="-27" width="16" height="26" rx="8" fill="#55b88a" transform="rotate(135)"/><rect x="-8" y="-27" width="16" height="26" rx="8" fill="#6aaee0" transform="rotate(180)"/><rect x="-8" y="-27" width="16" height="26" rx="8" fill="#9a7cc8" transform="rotate(225)"/><rect x="-8" y="-27" width="16" height="26" rx="8" fill="#cc6a9c" transform="rotate(270)"/><rect x="-8" y="-27" width="16" height="26" rx="8" fill="#ee4838" transform="rotate(315)"/></g></svg></div>
  <div class="app"><svg width="66" height="64" viewBox="0 0 66 64"><path d="M32 4Q62 6 62 30T32 55Q24 55 20 53Q16 59 8 60Q13 55 12 49Q1 42 1 29Q2 5 32 4Z" fill="url(#bl)"/><path d="M50 30A16 15 0 0 1 61 56Q61 61 65 63Q58 63 55 59A16 15 0 1 1 50 30Z" fill="#f3f7fb"/><circle cx="42" cy="46" r="3" fill="#2a5a94"/><circle cx="50" cy="46" r="3" fill="#2a5a94"/><circle cx="58" cy="46" r="3" fill="#2a5a94"/></svg></div>
  <div class="app"><svg width="66" height="64" viewBox="0 0 66 64"><rect x="1" y="5" width="57" height="52" rx="9" fill="url(#gr)"/><rect x="10" y="18" width="29" height="25" rx="6" fill="#f2f5f2"/><path d="M40 28L51 21V42L40 36Z" fill="#f2f5f2"/><circle cx="50" cy="46" r="15.500" fill="#f2f5f2"/><path d="M43 38Q45 51 57 54L59 49 54 47 51 49Q48 46 47 43L49 40 46 36Z" fill="#24c440"/></svg></div>
  <div class="app"><svg width="64" height="64" viewBox="0 0 64 64"><path d="M4 8L50 1 60 56 12 63Z" fill="#fafafa"/><path d="M3 7L50 1 52 10 5 17Z" fill="#f59a2a"/><text x="8" y="14" font-size="8" fill="#fff" transform="rotate(-8 8 14)">PAGES</text><path d="M11 21L31 18 34 33 14 36Z" fill="#3c98e8"/><path d="M18 25Q22 22 28 25L25 33Z" fill="#f28a1e"/><path d="M36 18L50 16M36 22L51 20M37 26L51 24M38 31L52 29M15 41L54 36M16 46L55 41M17 51L55 46M18 56L50 51" stroke="#999" stroke-width="1.300"/><path d="M58 0L42 48 38 63 36 62 39 45 53 0Z" fill="#f2a033" stroke="#a6621a"/><path d="M43 45L38 63 36 62 39 44Z" fill="#333"/></svg></div>
  <div class="app on"><svg width="64" height="64"><use href="#numbers"/></svg></div>
  <div class="app on"><svg width="64" height="64" viewBox="0 0 64 64"><path d="M8 1H56L62 27H2Z" fill="#2ca3f2"/><path d="M2 24H62V28H2Z" fill="#7dd0ff"/><path d="M14 4H50L53 22H11Z" fill="#fafafa"/><circle cx="25" cy="14" r="7" fill="#e94c8a"/><path d="M25 7V14H32A7 7 0 0 0 25 7" fill="#f7c52d"/><path d="M25 21A7 7 0 0 1 18 14H25Z" fill="#3fae6b"/><path d="M38 10h8M38 14h8M38 18h8" stroke="#bbb" stroke-width="1.500"/><path d="M31 28h3v29h-3z" fill="#c5ced8"/><ellipse cx="32" cy="60" rx="14" ry="4" fill="#bfdcf0"/></svg></div>
  <div class="app"><svg width="64" height="64" viewBox="0 0 64 64"><circle cx="32" cy="32" r="31" fill="url(#it)" stroke="#f0eef2" stroke-width="2.500"/><path d="M24 46V18L43 14V42" fill="none" stroke="#fff" stroke-width="3.500"/><path d="M24 17L43 13V20L24 24Z" fill="#fff"/><ellipse cx="19.500" cy="46.500" rx="6" ry="5" fill="#fff"/><ellipse cx="38.500" cy="42.500" rx="6" ry="5" fill="#fff"/></svg></div>
  <div class="app"><svg width="64" height="64" viewBox="0 0 64 64"><circle cx="32" cy="32" r="31" fill="url(#ib)" stroke="#f0eef2" stroke-width="2.500"/><path d="M31 20Q22 14 12 19V44Q22 40 31 46ZM33 20Q42 14 52 19V44Q42 40 33 46Z" fill="#f6f6f4"/></svg></div>
  <div class="app"><svg width="64" height="64" viewBox="0 0 64 64"><circle cx="32" cy="32" r="31" fill="url(#bl)" stroke="#f0eef2" stroke-width="2.500"/><path d="M34 11L16 47M29 11L49 47M11 39H53" stroke="#f4f8fc" stroke-width="5" fill="none"/><circle cx="57" cy="9" r="14" fill="#f03c3c"/><text x="57" y="15" font-size="16" text-anchor="middle" fill="#fff">6</text></svg></div>
  <div class="app"><svg width="64" height="64" viewBox="0 0 64 64"><rect y="3" width="64" height="60" rx="2" fill="url(#sil)"/><circle cx="32" cy="33" r="26" fill="#2a2a2a"/><circle cx="32" cy="33" r="23" fill="none" stroke="#b5b5b5" stroke-width="4" stroke-dasharray="3 2"/><circle cx="32" cy="33" r="18" fill="none" stroke="#c2c2c2" stroke-width="4"/><path d="M32 33L50 33M32 33L23 17M32 33L23 49" stroke="#c2c2c2" stroke-width="4"/><circle cx="32" cy="33" r="5" fill="#888"/></svg></div>
  <div class="app on"><svg width="66" height="66"><use href="#skype"/></svg></div>
  <div class="app on"><svg width="66" height="66"><use href="#vm"/></svg></div>
  <div class="app on"><svg width="66" height="66" viewBox="0 0 64 64"><use href="#globe" width="64" height="64"/><circle cx="15" cy="50" r="16" fill="#fff"/><circle cx="15" cy="50" r="14" fill="#c48c48"/><rect x="8" y="48" width="14" height="10" fill="#fff"/><path d="M10.500 48V44Q15 38 19.500 44V48" fill="none" stroke="#fff" stroke-width="2.500"/></svg></div>
  <div class="app on"><svg width="64" height="64" viewBox="0 0 64 64"><rect x="1" y="5" width="62" height="55" rx="2" fill="#1c1c1c" stroke="#b4bcbc" stroke-width="2"/><rect x="4" y="8" width="56" height="49" fill="#222"/><text x="8" y="22" font-family="Liberation Mono" font-weight="bold" font-size="14" fill="#fff">&gt;_</text></svg></div>
  <div class="app on"><svg width="66" height="66"><use href="#sync"/></svg></div>
  <div class="app on"><svg width="64" height="64"><use href="#textedit"/></svg></div>
  <div class="sep"></div>
  <div class="app"><svg width="50" height="66" viewBox="0 0 50 66"><path d="M3 0H24L40 10V60H3Z" fill="#e8e8e8"/><path d="M1 6H30L48 22V66H1Z" fill="#fbfbfb" stroke="#ddd"/><path d="M30 6Q34 16 31 20Q42 18 48 24Z" fill="#e4e4e4" stroke="#c8c8c8"/></svg></div>
  <div class="app"><svg width="70" height="64" viewBox="0 0 70 64"><path d="M0 12h70v41H0z" fill="#f4f4f4" stroke="#ccc"/><path d="M0 12h70v4H0z" fill="#ddd"/><path d="M4 20h24M4 24h18M4 28h26M4 32h20M4 36h14M4 40h22M4 44h18M38 20h24M38 24h18M38 28h26M38 32h20M38 36h14M38 40h12" stroke="#c4c4c4" stroke-width="1.300"/><use href="#sync" x="43" y="40" width="28" height="26"/></svg></div>
  <div class="app"><svg width="70" height="64" viewBox="0 0 70 64"><path d="M0 13h70v39H0z" fill="#fff" stroke="#ccc"/><path d="M0 13h70v4H0z" fill="#ddd"/><path d="M4 21h48M4 24h18M4 28h46M4 32h50M4 36h24M4 40h42M4 44h18" stroke="#c6c6c6" stroke-width="1.300"/><use href="#textedit" x="43" y="40" width="28" height="26"/></svg></div>
  <div class="app"><svg width="70" height="64" viewBox="0 0 70 64"><path d="M0 13h70v39H0z" fill="#fff" stroke="#ccc"/><path d="M0 13h70v3H0z" fill="#e8e8e8"/><path d="M35 17.500h34" stroke="#c33" stroke-width="2"/><path d="M4 20h5M4 28h10M4 32h8" stroke="#cbd" stroke-width="1.300"/><use href="#textedit" x="43" y="40" width="28" height="26"/></svg></div>
  <div class="app"><svg width="70" height="64" viewBox="0 0 70 64"><path d="M0 13h70v39H0z" fill="#fff" stroke="#ccc"/><path d="M0 13h70v4H0z" fill="#ddd"/><path d="M4 21h38M4 24h28M4 28h46M4 32h20M8 36h14M8 40h12M8 44h18" stroke="#c6c6c6" stroke-width="1.300"/><use href="#textedit" x="43" y="40" width="28" height="26"/></svg></div>
  <div class="app"><svg width="70" height="64" viewBox="0 0 70 64"><path d="M0 13h70v39H0z" fill="#fff" stroke="#ccc"/><path d="M0 14h10v38H0z" fill="#eef6fb"/><path d="M0 26.500h9" stroke="#38b0b4" stroke-width="2"/><path d="M11 25h26M2 16h5M2 21h5" stroke="#9cd6ee" stroke-width="1.300"/><circle cx="12" cy="19" r="2" fill="#333"/><path d="M62 19h6" stroke="#1ba8e8" stroke-width="3"/><path d="M24 32h30M24 37h30M24 42h24M24 47h20" stroke="#e0e6ec" stroke-width="2.500"/><path d="M22 31v16" stroke="#c88" stroke-dasharray="2 3"/><use href="#skype" x="42" y="38" width="30" height="30"/></svg></div>
  <div class="app"><svg width="70" height="64" viewBox="0 0 70 64"><path d="M0 13h70v39H0z" fill="#fafafa" stroke="#ccc"/><path d="M5 20V52M57 14V52M0 50H56" stroke="#ccc" stroke-width="1.500"/><path d="M26 30h12M28 27h8" stroke="#c4c4c4"/><path d="M0 22h56" stroke="#aaa" stroke-width="2"/><use href="#numbers" x="42" y="38" width="29" height="29"/></svg></div>
  <div class="app"><svg width="70" height="64" viewBox="0 0 70 64"><path d="M0 8h70v48H0z" fill="#fdfdfb" stroke="#ccc"/><circle cx="3" cy="9.500" r="1" fill="#e55"/><circle cx="6" cy="9.500" r="1" fill="#db4"/><path d="M2 17h14M2 21h12M2 25h14M2 29h12M2 33h10M22 17h8M22 20h5" stroke="#bbb" stroke-width="1.500"/><path d="M20 17H66" stroke="#ccc"/><path d="M20 13V56" stroke="#ddd"/><use href="#note" x="45" y="41" width="26" height="25"/><path d="M46 43L65 40 66 47 47 50Z" fill="#fcc92f"/></svg></div>
  <div class="app"><svg width="56" height="68" viewBox="0 0 56 68"><path d="M6 12L12 1 20 5 30 0 38 5 46 2 51 13Z" fill="#dcdfe0"/><path d="M12 10l6-6 7 7zM32 5l7 7-9 1z" fill="#4a4f56"/><path d="M24 5l5 2-3 6z" fill="#c8503c"/><path d="M2 10H54L47 60Q46 66 28 66T9 60Z" fill="#dedfe0" stroke="#f5f5f5" stroke-width="1.500"/><path d="M14 16L18 60M40 16L36 60" stroke="#d5d6d8" stroke-width="3"/></svg></div>
 </div>
</div>
</div>
<script src="https://cdn.jsdelivr.net/npm/bootstrap@5.3.0/dist/js/bootstrap.bundle.min.js"></script>
</body>
</html>
